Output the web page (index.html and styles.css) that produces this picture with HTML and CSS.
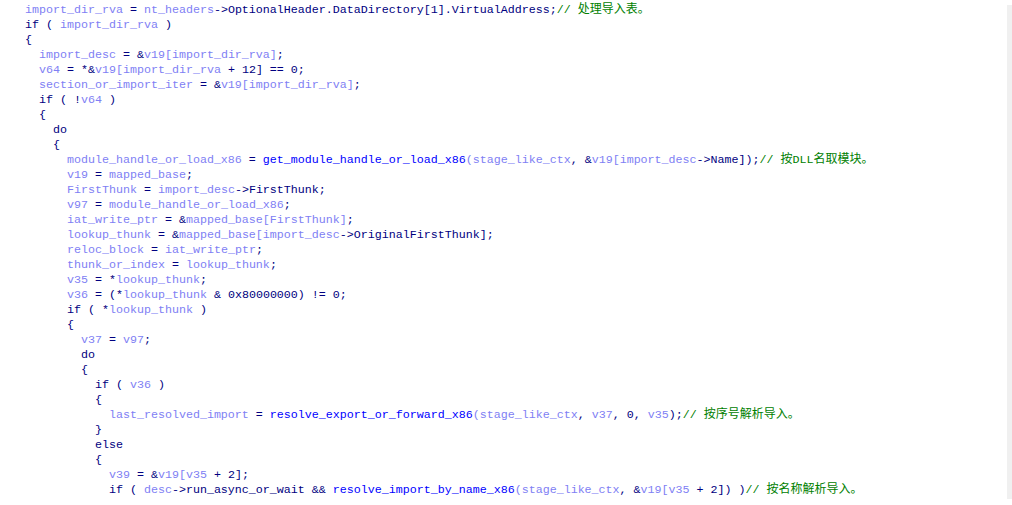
FILE: index.html
```html
<!DOCTYPE html>
<html>
<head>
<meta charset="utf-8">
<link rel="stylesheet" href="styles.css">
</head>
<body>
<div class="panel">
<div class="code">
<div class="ln"><span class="v">import_dir_rva</span> = <span class="v">nt_headers</span>-&gt;OptionalHeader.DataDirectory[1].VirtualAddress;<span class="c">// <span class="z">处理导入表。</span></span></div>
<div class="ln">if ( <span class="v">import_dir_rva</span> )</div>
<div class="ln">{</div>
<div class="ln">  <span class="v">import_desc</span> = &amp;<span class="v">v19[import_dir_rva]</span>;</div>
<div class="ln">  <span class="v">v64</span> = *&amp;<span class="v">v19[import_dir_rva</span> + 12] == 0;</div>
<div class="ln">  <span class="v">section_or_import_iter</span> = &amp;<span class="v">v19[import_dir_rva]</span>;</div>
<div class="ln">  if ( !<span class="v">v64</span> )</div>
<div class="ln">  {</div>
<div class="ln">    do</div>
<div class="ln">    {</div>
<div class="ln">      <span class="v">module_handle_or_load_x86</span> = <span class="f">get_module_handle_or_load_x86</span><span class="v">(stage_like_ctx</span>, &amp;<span class="v">v19[import_desc</span>-&gt;Name]);<span class="c">// <span class="z">按</span>DLL<span class="z">名取模块。</span></span></div>
<div class="ln">      <span class="v">v19</span> = <span class="v">mapped_base</span>;</div>
<div class="ln">      <span class="v">FirstThunk</span> = <span class="v">import_desc</span>-&gt;FirstThunk;</div>
<div class="ln">      <span class="v">v97</span> = <span class="v">module_handle_or_load_x86</span>;</div>
<div class="ln">      <span class="v">iat_write_ptr</span> = &amp;<span class="v">mapped_base[FirstThunk]</span>;</div>
<div class="ln">      <span class="v">lookup_thunk</span> = &amp;<span class="v">mapped_base[import_desc</span>-&gt;OriginalFirstThunk];</div>
<div class="ln">      <span class="v">reloc_block</span> = <span class="v">iat_write_ptr</span>;</div>
<div class="ln">      <span class="v">thunk_or_index</span> = <span class="v">lookup_thunk</span>;</div>
<div class="ln">      <span class="v">v35</span> = *<span class="v">lookup_thunk</span>;</div>
<div class="ln">      <span class="v">v36</span> = (*<span class="v">lookup_thunk</span> &amp; 0x80000000) != 0;</div>
<div class="ln">      if ( *<span class="v">lookup_thunk</span> )</div>
<div class="ln">      {</div>
<div class="ln">        <span class="v">v37</span> = <span class="v">v97</span>;</div>
<div class="ln">        do</div>
<div class="ln">        {</div>
<div class="ln">          if ( <span class="v">v36</span> )</div>
<div class="ln">          {</div>
<div class="ln">            <span class="v">last_resolved_import</span> = <span class="f">resolve_export_or_forward_x86</span><span class="v">(stage_like_ctx</span>, <span class="v">v37</span>, 0, <span class="v">v35</span>);<span class="c">// <span class="z">按序号解析导入。</span></span></div>
<div class="ln">          }</div>
<div class="ln">          else</div>
<div class="ln">          {</div>
<div class="ln">            <span class="v">v39</span> = &amp;<span class="v">v19[v35</span> + 2];</div>
<div class="ln">            if ( <span class="v">desc</span>-&gt;run_async_or_wait &amp;&amp; <span class="f">resolve_import_by_name_x86</span><span class="v">(stage_like_ctx</span>, &amp;<span class="v">v19[v35</span> + 2]) )<span class="c">// <span class="z">按名称解析导入。</span></span></div>
<div class="ln">            {</div>
</div>
</div>
</body>
</html>
```
FILE: styles.css
```css
html, body {
  margin: 0;
  padding: 0;
  background: #ffffff;
  overflow: hidden;
}
.panel {
  width: 1007px;
  height: 499px;
  background: #ffffff;
  box-shadow: 5px 5px 0 #f0f0f0;
  overflow: hidden;
}
.code {
  padding-top: 3px;
  padding-left: 25px;
  font-family: "Liberation Mono", "DejaVu Sans Mono", monospace;
  font-size: 11.67px;
  color: #000080;
}
.ln {
  white-space: pre;
  height: 15px;
  line-height: 15px;
}
.v {
  color: #8080f4;
}
.f {
  color: #0000ff;
}
.c {
  color: #008000;
}
.z {
  font-family: "Noto Sans CJK SC", sans-serif;
  font-size: 12px;
  line-height: 0;
}
```
